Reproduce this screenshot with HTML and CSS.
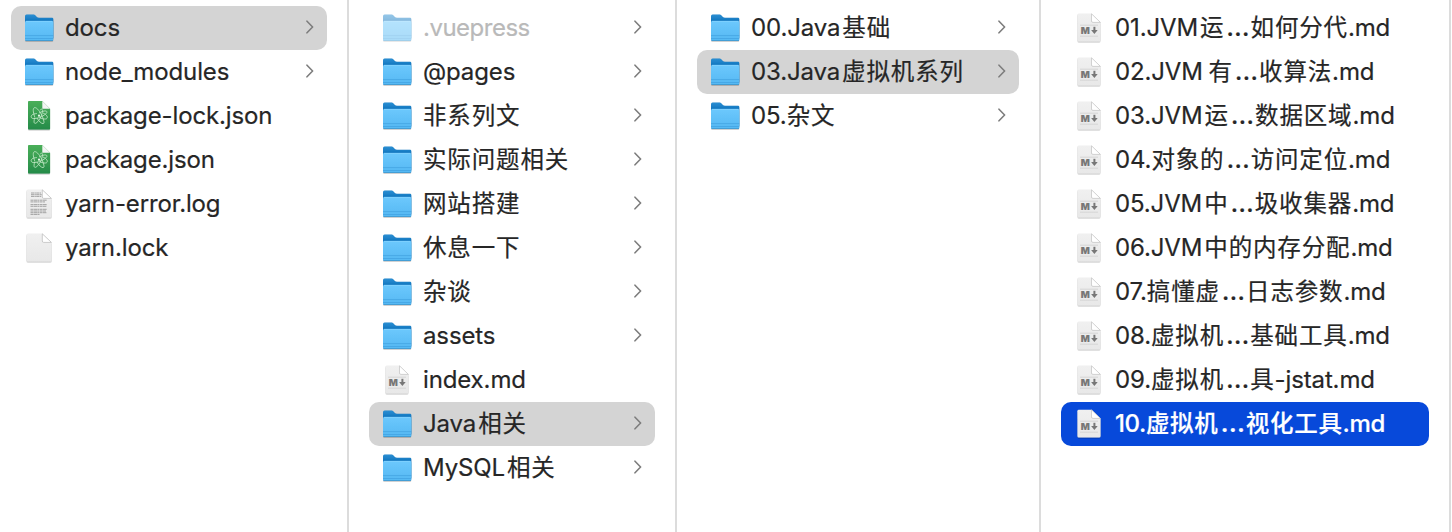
FILE: index.html
```html
<!DOCTYPE html>
<html lang="zh-CN">
<head>
<meta charset="utf-8">
<title>docs</title>
<link rel="stylesheet" href="styles.css">
</head>
<body>
<svg class="defs" width="0" height="0" aria-hidden="true">
  <defs>
    <linearGradient id="folder-front" x1="0" y1="0" x2="0" y2="1"><stop offset="0" stop-color="#6cc8fd"/><stop offset="1" stop-color="#55b8f3"/></linearGradient>
    <linearGradient id="folder-back" x1="0" y1="0" x2="0" y2="1"><stop offset="0" stop-color="#2c8fd3"/><stop offset=".3" stop-color="#0f74bd"/></linearGradient>
    <linearGradient id="paper" x1="0" y1="0" x2="0" y2="1"><stop offset="0" stop-color="#f0f0f0"/><stop offset="1" stop-color="#e8e8e8"/></linearGradient>
    <linearGradient id="green" x1="0" y1="0" x2="0" y2="1"><stop offset="0" stop-color="#4aaf59"/><stop offset="1" stop-color="#258b49"/></linearGradient>
    <filter id="drop" x="-20%" y="-20%" width="140%" height="150%"><feDropShadow dx="0" dy="0.6" stdDeviation="0.6" flood-color="#000" flood-opacity="0.4"/></filter>
    <symbol id="folder" viewBox="0 0 32 32">
      <g filter="url(#drop)">
        <path d="M2 4.2Q2 2.6 3.6 2.6H10.6Q11.6 2.6 12.5 3.5L13.9 4.9Q14.7 5.7 16 5.7H29Q30.3 5.7 30.3 7V26H2Z" fill="url(#folder-back)"/>
        <path d="M2 10.4Q2 9 3.4 9H28.9Q30.3 9 30.3 10.4V27.6Q30.3 28.8 29.1 28.8H3.2Q2 28.8 2 27.6Z" fill="url(#folder-front)"/>
      </g>
      <path d="M3 9.3H29.4" stroke="#8bd5ff" stroke-width=".7"/>
      <path d="M2 23.6H30.3M2 26.5H30.3" stroke="#3c9cdc" stroke-width=".6"/>
      <path d="M2.5 28.5H30" stroke="#3390cb" stroke-width=".7"/>
    </symbol>
    <symbol id="md" viewBox="0 0 32 32">
      <g filter="url(#drop)"><path d="M5.8 1.8H18.5L27.6 10.6V28Q27.6 29.6 26 29.6H5.8Q4.4 29.6 4.4 28V3.2Q4.4 1.8 5.8 1.8Z" fill="url(#paper)"/></g>
      <path d="M18.5 1.8V9Q18.5 10.4 19.9 10.4H27.4Z" fill="#fff" stroke="#c0c0c0" stroke-width=".7"/>
      <path d="M7 13.2H25M7 24.2H25" stroke="#d0d0d0" stroke-width=".8"/>
      <text x="7.7" y="21.7" class="md-letter">M</text>
      <path d="M21.4 14.8V20" stroke="#777" stroke-width="2"/><path d="M18.1 18H24.7L21.4 22Z" fill="#777"/>
    </symbol>
    <symbol id="atom" viewBox="0 0 32 32">
      <g filter="url(#drop)"><path d="M6 .9H19.3L27.1 8.8V28.5Q27.1 29.5 26.1 29.5H6Q5 29.5 5 28.5V1.9Q5 .9 6 .9Z" fill="url(#green)"/></g>
      <path d="M19.3 .9V8.8H27.1Z" fill="#f4f4f4"/>
      <g fill="none" stroke="#c9ebcc" stroke-width=".8" stroke-linecap="round">
        <path d="M13.5 13.6C9.6 13.6 7.4 15.6 8.4 17.6C9.6 19.4 14 18.6 18.6 16.6C23.4 14.2 25.4 11.6 22.8 11C21 10.7 18.6 11.6 16.4 12.8"/>
        <path d="M11.6 16.6C10 12 9.6 7.8 11.8 7.6C14 7.5 17.4 12 19.4 16.6C21.2 21 21.6 23.6 20 23.6C18.4 23.6 16 21.4 14 18.2"/>
        <path d="M17.4 9.8C18.8 8.4 20 9.2 19.4 12.2C18.6 16.4 15.6 21.8 12.8 23.2C10.6 24 10.6 21 11.8 17.8M20.4 13.2C24 14.6 25.4 17.6 23.4 18.8C22 19.4 19.6 19 17.4 18"/>
      </g>
      <circle cx="16" cy="15.7" r="1.1" fill="#e9f8ea"/>
    </symbol>
    <symbol id="blank" viewBox="0 0 32 32">
      <g filter="url(#drop)"><path d="M4.9 1.8H19.3L28.8 11V28Q28.8 29.6 27.2 29.6H5Q3.4 29.6 3.4 28V3.3Q3.4 1.8 4.9 1.8Z" fill="url(#paper)"/></g>
      <path d="M19.3 1.8V9Q19.3 10.4 20.7 10.4H28.4Z" fill="#fff" stroke="#b8b8b8" stroke-width=".7"/>
    </symbol>
    <symbol id="log" viewBox="0 0 32 32">
      <use href="#blank" width="32" height="32"/>
      <g stroke="#8f8f8f" stroke-width=".8" fill="none">
        <path d="M8 5H18M8 6.7H19M8 8.4H18.5" stroke-dasharray="3 .4 1.5 .3"/>
        <path d="M7.5 12.2H24M7.5 13.9H22M7.5 16.6H24M7.5 18.3H23.5M7.5 21.3H24M7.5 23H23M7.5 24.7H23.5M7.5 26.4H17" stroke-dasharray="2.5 .4 4 .3 1.3 .5"/>
      </g>
    </symbol>
    <symbol id="chevron" viewBox="0 0 8 14"><path d="M1 1.2L6.6 7L1 12.8" fill="none" stroke="currentColor" stroke-width="1.6" stroke-linecap="round" stroke-linejoin="round"/></symbol>
  </defs>
</svg>
<main class="browser">
  <ul class="column column-root">
    <li class="row open"><svg class="icon"><use href="#folder"/></svg><span class="name">docs</span><svg class="chevron"><use href="#chevron"/></svg></li>
    <li class="row"><svg class="icon"><use href="#folder"/></svg><span class="name">node_modules</span><svg class="chevron"><use href="#chevron"/></svg></li>
    <li class="row"><svg class="icon"><use href="#atom"/></svg><span class="name">package-lock.json</span></li>
    <li class="row"><svg class="icon"><use href="#atom"/></svg><span class="name">package.json</span></li>
    <li class="row"><svg class="icon"><use href="#log"/></svg><span class="name">yarn-error.log</span></li>
    <li class="row"><svg class="icon"><use href="#blank"/></svg><span class="name">yarn.lock</span></li>
  </ul>
  <ul class="column column-docs">
    <li class="row hidden-item"><svg class="icon"><use href="#folder"/></svg><span class="name">.vuepress</span><svg class="chevron"><use href="#chevron"/></svg></li>
    <li class="row"><svg class="icon"><use href="#folder"/></svg><span class="name">@pages</span><svg class="chevron"><use href="#chevron"/></svg></li>
    <li class="row"><svg class="icon"><use href="#folder"/></svg><span class="name"><span class="han">非系列文</span></span><svg class="chevron"><use href="#chevron"/></svg></li>
    <li class="row"><svg class="icon"><use href="#folder"/></svg><span class="name"><span class="han">实际问题相关</span></span><svg class="chevron"><use href="#chevron"/></svg></li>
    <li class="row"><svg class="icon"><use href="#folder"/></svg><span class="name"><span class="han">网站搭建</span></span><svg class="chevron"><use href="#chevron"/></svg></li>
    <li class="row"><svg class="icon"><use href="#folder"/></svg><span class="name"><span class="han">休息一下</span></span><svg class="chevron"><use href="#chevron"/></svg></li>
    <li class="row"><svg class="icon"><use href="#folder"/></svg><span class="name"><span class="han">杂谈</span></span><svg class="chevron"><use href="#chevron"/></svg></li>
    <li class="row"><svg class="icon"><use href="#folder"/></svg><span class="name">assets</span><svg class="chevron"><use href="#chevron"/></svg></li>
    <li class="row"><svg class="icon"><use href="#md"/></svg><span class="name">index.md</span></li>
    <li class="row open"><svg class="icon"><use href="#folder"/></svg><span class="name">Java<span class="han gap">相关</span></span><svg class="chevron"><use href="#chevron"/></svg></li>
    <li class="row"><svg class="icon"><use href="#folder"/></svg><span class="name">MySQL<span class="han gap">相关</span></span><svg class="chevron"><use href="#chevron"/></svg></li>
  </ul>
  <ul class="column column-java">
    <li class="row"><svg class="icon"><use href="#folder"/></svg><span class="name">00.Java<span class="han gap">基础</span></span><svg class="chevron"><use href="#chevron"/></svg></li>
    <li class="row open"><svg class="icon"><use href="#folder"/></svg><span class="name">03.Java<span class="han gap">虚拟机系列</span></span><svg class="chevron"><use href="#chevron"/></svg></li>
    <li class="row"><svg class="icon"><use href="#folder"/></svg><span class="name">05.<span class="han">杂文</span></span><svg class="chevron"><use href="#chevron"/></svg></li>
  </ul>
  <ul class="column column-files">
    <li class="row"><svg class="icon"><use href="#md"/></svg><span class="name">01.JVM<span class="han gap">运<span class="dots">…</span>如何分代</span>.md</span></li>
    <li class="row"><svg class="icon"><use href="#md"/></svg><span class="name">02.JVM <span class="han">有<span class="dots">…</span>收算法</span>.md</span></li>
    <li class="row"><svg class="icon"><use href="#md"/></svg><span class="name">03.JVM<span class="han gap">运<span class="dots">…</span>数据区域</span>.md</span></li>
    <li class="row"><svg class="icon"><use href="#md"/></svg><span class="name">04.<span class="han">对象的<span class="dots">…</span>访问定位</span>.md</span></li>
    <li class="row"><svg class="icon"><use href="#md"/></svg><span class="name">05.JVM<span class="han gap">中<span class="dots">…</span>圾收集器</span>.md</span></li>
    <li class="row"><svg class="icon"><use href="#md"/></svg><span class="name">06.JVM<span class="han gap">中的内存分配</span>.md</span></li>
    <li class="row"><svg class="icon"><use href="#md"/></svg><span class="name">07.<span class="han">搞懂虚<span class="dots">…</span>日志参数</span>.md</span></li>
    <li class="row"><svg class="icon"><use href="#md"/></svg><span class="name">08.<span class="han">虚拟机<span class="dots">…</span>基础工具</span>.md</span></li>
    <li class="row"><svg class="icon"><use href="#md"/></svg><span class="name">09.<span class="han">虚拟机<span class="dots">…</span>具</span>-jstat.md</span></li>
    <li class="row selected"><svg class="icon"><use href="#md"/></svg><span class="name">10.<span class="han">虚拟机<span class="dots">…</span>视化工具</span>.md</span></li>
  </ul>
</main>
</body>
</html>
```
FILE: styles.css
```css
body {
  margin: 0;
  background: #fff;
  color: #262626;
  font-family: Inter, "Noto Sans CJK SC", sans-serif;
  font-size: 24px;
  letter-spacing: -.13px;
  word-spacing: -1px;
  -webkit-text-stroke: .2px currentColor;
  overflow: hidden;
}
.defs { display: block; }
.browser { display: flex; height: 532px; }
.column {
  box-sizing: border-box;
  flex: none;
  margin: 0;
  padding: 6px 20px 0;
  border-right: 2px solid #dcdcdc;
  list-style: none;
}
.column-root { width: 349px; padding-left: 11px; }
.column-docs { width: 328px; }
.column-java { width: 364px; }
.column-files { width: 410px; }
.row {
  box-sizing: border-box;
  display: flex;
  align-items: center;
  height: 44px;
  padding: 0 13px 0 12px;
  border-radius: 10px;
}
.icon { flex: none; width: 32px; height: 32px; margin-bottom: 1px; }
.name { flex: 1; margin-left: 10px; line-height: 44px; white-space: nowrap; }
.han { font-size: 23.5px; line-height: 1; letter-spacing: .85px; }
.gap { margin-left: 2px; }
.dots { margin: 0 0 0 2px; font-size: 27px; line-height: 1; }
.chevron { flex: none; width: 8px; height: 14px; margin-bottom: 2px; color: #7d7d7d; }
.open { background: #d4d4d4; }
.selected { background: #0749da; color: #fff; font-weight: 500; }
.selected .name { letter-spacing: -.4px; }
.selected .han { letter-spacing: .7px; }
.hidden-item .icon { opacity: .5; }
.hidden-item .name { color: #b9b9b9; letter-spacing: -.5px; }
.md-letter { font: 900 9.5px Inter, sans-serif; letter-spacing: 0; fill: #777; }
```
